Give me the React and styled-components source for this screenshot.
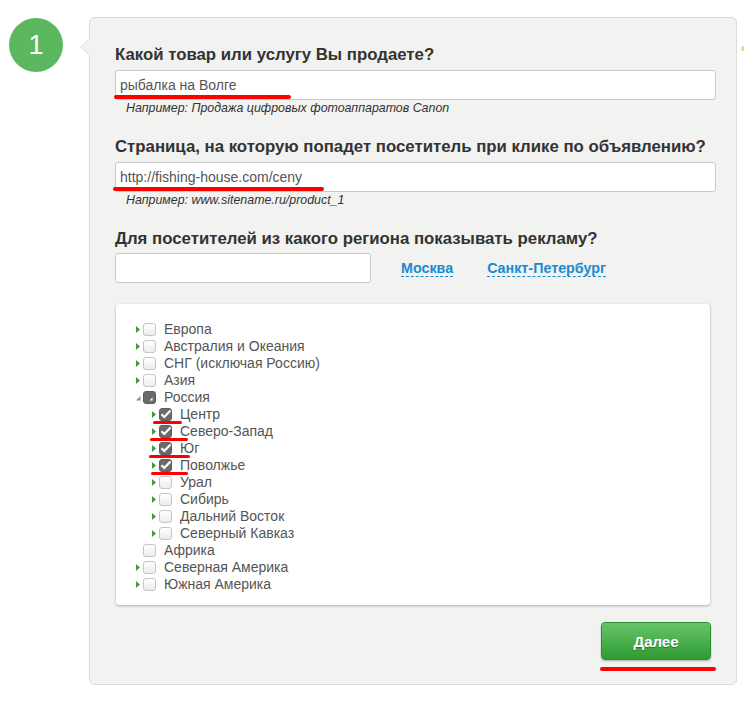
import React from "react";
import styled, { createGlobalStyle } from "styled-components";

const regions = [
  { label: "Европа", level: 0, arrow: "closed" },
  { label: "Австралия и Океания", level: 0, arrow: "closed" },
  { label: "СНГ (исключая Россию)", level: 0, arrow: "closed" },
  { label: "Азия", level: 0, arrow: "closed" },
  { label: "Россия", level: 0, arrow: "open", state: "partial" },
  { label: "Центр", level: 1, arrow: "closed", state: "checked", mark: [37, 29] },
  { label: "Северо-Запад", level: 1, arrow: "closed", state: "checked", mark: [34, 38] },
  { label: "Юг", level: 1, arrow: "closed", state: "checked", mark: [33, 41] },
  { label: "Поволжье", level: 1, arrow: "closed", state: "checked", mark: [35, 37] },
  { label: "Урал", level: 1, arrow: "closed" },
  { label: "Сибирь", level: 1, arrow: "closed" },
  { label: "Дальний Восток", level: 1, arrow: "closed" },
  { label: "Северный Кавказ", level: 1, arrow: "closed" },
  { label: "Африка", level: 0 },
  { label: "Северная Америка", level: 0, arrow: "closed" },
  { label: "Южная Америка", level: 0, arrow: "closed" }
];

export default () => {
  return (
    <Page>
      <GlobalStyle />
      <Step>1</Step>
      <Panel>
        <Heading>Какой товар или услугу Вы продаете?</Heading>
        <Field>
          <Input defaultValue="рыбалка на Волге" />
          <Mark style={{ left: -1, top: 25, width: 177 }} />
        </Field>
        <Hint>Например: Продажа цифровых фотоаппаратов Canon</Hint>

        <Heading>
          Страница, на которую попадет посетитель при клике по объявлению?
        </Heading>
        <Field>
          <Input defaultValue="http://fishing-house.com/ceny" />
          <Mark style={{ left: -2, top: 25, width: 211 }} />
        </Field>
        <Hint>Например: www.sitename.ru/product_1</Hint>

        <Heading>Для посетителей из какого региона показывать рекламу?</Heading>
        <RegionLine>
          <Input short />
          <Quick>Москва</Quick>
          <Quick>Санкт-Петербург</Quick>
        </RegionLine>

        <Tree>
          {regions.map((r) => (
            <Row key={r.label} level={r.level}>
              <Arrow>
                {r.arrow === "closed" && (
                  <svg width="4" height="7" viewBox="0 0 4 7">
                    <path d="M0 0L4 3.5L0 7Z" fill="#3d9f35" />
                  </svg>
                )}
                {r.arrow === "open" && (
                  <svg width="5" height="7" viewBox="0 0 5 7">
                    <path d="M4.5 2L4.5 6.5L0 6.5Z" fill="#8a8a8a" />
                  </svg>
                )}
              </Arrow>
              <Box state={r.state}>
                {r.state === "checked" && (
                  <svg width="13" height="13" viewBox="0 0 13 13">
                    <path
                      d="M2.5 6.2L5.3 9L11.5 2.6"
                      fill="none"
                      stroke="#fff"
                      strokeWidth="2.2"
                    />
                  </svg>
                )}
                {r.state === "partial" && (
                  <svg width="13" height="13" viewBox="0 0 13 13">
                    <path d="M9.5 6.5L9.5 9.5L6.5 9.5Z" fill="#fff" />
                  </svg>
                )}
              </Box>
              <Label>{r.label}</Label>
              {r.mark && (
                <RowMark style={{ left: r.mark[0], width: r.mark[1] }} />
              )}
            </Row>
          ))}
        </Tree>

        <Footer>
          <Button>Далее</Button>
          <ButtonMark />
        </Footer>
      </Panel>
      <Dot />
    </Page>
  );
};

const GlobalStyle = createGlobalStyle`
  body {
    margin: 0;
    background: #fff;
    font-family: "Liberation Sans", Arial, sans-serif;
  }
`;

const Page = styled.div`
  position: relative;
  display: flex;
  align-items: flex-start;
  padding: 17px 0 0 9px;
  width: 744px;
  height: 710px;
  box-sizing: border-box;
  overflow: hidden;
`;

const Step = styled.div`
  flex: none;
  width: 54px;
  height: 54px;
  margin-top: 1px;
  border-radius: 50%;
  background: #5cb85e;
  color: #fff;
  font-size: 27px;
  line-height: 54px;
  text-align: center;
`;

const Panel = styled.div`
  position: relative;
  flex: none;
  margin-left: 26px;
  width: 648px;
  height: 668px;
  box-sizing: border-box;
  padding: 27px 26px 0 25px;
  background: #f2f2f1;
  border: 1px solid #dcdcdc;
  border-radius: 5px;

  &:before,
  &:after {
    content: "";
    position: absolute;
    top: 20px;
    border-style: solid;
    border-color: transparent;
  }
  &:before {
    left: -10px;
    border-width: 9px 10px 9px 0;
    border-right-color: #dcdcdc;
  }
  &:after {
    left: -9px;
    border-width: 9px 10px 9px 0;
    border-right-color: #f2f2f1;
  }
`;

const Heading = styled.div`
  font-size: 16.8px;
  font-weight: bold;
  line-height: 20px;
  color: #333;
  white-space: nowrap;
  margin-bottom: 5px;
`;

const Field = styled.div`
  position: relative;
`;

const Input = styled.input`
  display: block;
  box-sizing: border-box;
  width: ${(p) => (p.short ? "256px" : "601px")};
  height: 30px;
  padding: 0 4px;
  border: 1px solid #c9c9c9;
  border-radius: 3px;
  background: #fff;
  font-family: "Liberation Sans", Arial, sans-serif;
  font-size: 14px;
  color: #555;
  outline: none;
`;

const Mark = styled.div`
  position: absolute;
  height: 4px;
  border-radius: 2px;
  background: #f00;
`;

const Hint = styled.div`
  margin: 1px 0 22px 11px;
  font-size: 12.4px;
  line-height: 14px;
  font-style: italic;
  color: #333;
`;

const RegionLine = styled.div`
  display: flex;
  align-items: center;
  margin-top: -1px;
`;

const Quick = styled.span`
  margin-left: 30px;
  font-size: 14.3px;
  font-weight: bold;
  line-height: 16px;
  color: #1b8bd0;
  border-bottom: 1px dashed #1b8bd0;
  cursor: pointer;

  & + & {
    margin-left: 34px;
  }
`;

const Tree = styled.div`
  margin: 21px 0 0 1px;
  width: 594px;
  box-sizing: border-box;
  padding: 17px 0 12px;
  background: #fff;
  border-radius: 4px;
  box-shadow: 0 1px 3px rgba(0, 0, 0, 0.28);
`;

const Row = styled.div`
  position: relative;
  display: flex;
  align-items: center;
  height: 17px;
  padding-left: ${(p) => 20 + p.level * 16}px;
`;

const Arrow = styled.span`
  flex: none;
  display: flex;
  align-items: center;
  width: 7px;
  height: 17px;
`;

const Box = styled.span`
  flex: none;
  display: block;
  width: 13px;
  height: 13px;
  box-sizing: border-box;
  border-radius: 3px;
  border: 1px solid ${(p) => (p.state ? "#5e5e5e" : "#c4c4c4")};
  background: ${(p) =>
    p.state ? "#6b6b6b" : "linear-gradient(#fff, #ececec)"};
  overflow: visible;

  svg {
    display: block;
    margin: -1px 0 0 -1px;
  }
`;

const Label = styled.span`
  margin-left: 8px;
  font-size: 14px;
  line-height: 17px;
  color: #555;
`;

const RowMark = styled.span`
  position: absolute;
  top: 15px;
  height: 3px;
  border-radius: 2px;
  background: #f00;
`;

const Footer = styled.div`
  display: flex;
  flex-direction: column;
  align-items: flex-end;
  margin-top: 17px;
`;

const Button = styled.button`
  width: 110px;
  height: 38px;
  margin-right: -1px;
  border: 1px solid #2c8e30;
  border-radius: 4px;
  background: linear-gradient(#66c468, #2f9c34);
  box-shadow: 0 1px 2px rgba(0, 0, 0, 0.3);
  color: #fff;
  font-family: "Liberation Sans", Arial, sans-serif;
  font-size: 15px;
  font-weight: bold;
  text-shadow: 0 1px 1px rgba(0, 0, 0, 0.35);
  cursor: pointer;
`;

const ButtonMark = styled.div`
  width: 116px;
  height: 4px;
  margin: 7px -6px 0 0;
  border-radius: 2px;
  background: #f00;
`;

const Dot = styled.span`
  position: absolute;
  left: 741px;
  top: 46px;
  width: 5px;
  height: 5px;
  border-radius: 50%;
  background: #ecd98a;
`;
